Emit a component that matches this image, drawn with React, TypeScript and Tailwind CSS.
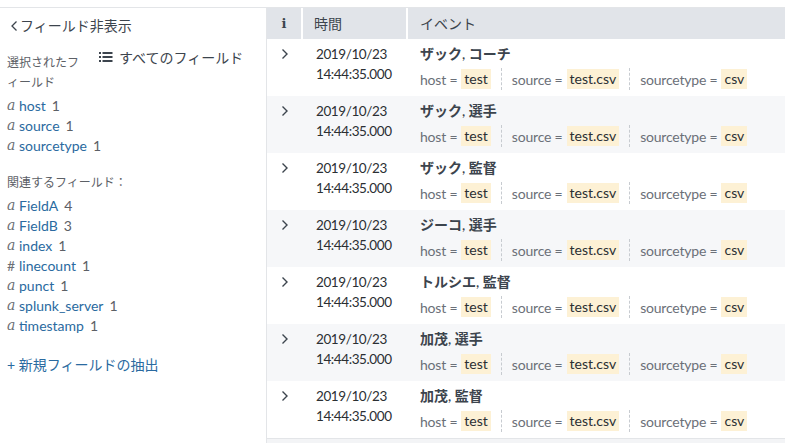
import React from 'react'

const FONT = { fontFamily: 'Lato, "Noto Sans CJK JP", sans-serif' }

type Field = { type: string; name: string; count: number }

const selected: Field[] = [
  { type: 'a', name: 'host', count: 1 },
  { type: 'a', name: 'source', count: 1 },
  { type: 'a', name: 'sourcetype', count: 1 },
]

const related: Field[] = [
  { type: 'a', name: 'FieldA', count: 4 },
  { type: 'a', name: 'FieldB', count: 3 },
  { type: 'a', name: 'index', count: 1 },
  { type: '#', name: 'linecount', count: 1 },
  { type: 'a', name: 'punct', count: 1 },
  { type: 'a', name: 'splunk_server', count: 1 },
  { type: 'a', name: 'timestamp', count: 1 },
]

const events = ['ザック, コーチ', 'ザック, 選手', 'ザック, 監督', 'ジーコ, 選手', 'トルシエ, 監督', '加茂, 選手', '加茂, 監督']

function FieldItem({ f }: { f: Field }) {
  return (
    <div className="flex h-5 items-center text-[14px]">
      {f.type === '#' ? (
        <span className="w-[12px] text-[#6b6f75]">#</span>
      ) : (
        <span className="w-[12px] italic text-[#6b6f75]" style={{ fontFamily: '"DejaVu Serif", serif', fontSize: 14 }}>
          a
        </span>
      )}
      <span className="text-[#2a6aa0]">{f.name}</span>
      <span className="ml-[6px] text-[#5c6066]">{f.count}</span>
    </div>
  )
}

function Sidebar() {
  return (
    <div className="w-[267px] shrink-0 border-r border-[#e3e5e8] pl-[7px] pt-[7px]">
      <div className="flex items-center pl-[3px] text-[14px] text-[#3c444d]">
        <svg width="8" height="12" viewBox="0 0 8 12" className="mr-[2px]">
          <path d="M6.5 1.5 L2 6 L6.5 10.5" fill="none" stroke="#3c444d" strokeWidth="1.3" />
        </svg>
        フィールド非表示
      </div>
      <div className="mt-[11px] flex">
        <div className="w-[86px] pt-[6px] text-[12px] leading-[20px] text-[#5c6066]">
          選択されたフ
          <br />
          ィールド
        </div>
        <div className="ml-[6px] flex h-[20px] items-center text-[14px] text-[#3c444d]">
          <svg width="14" height="12" viewBox="0 0 14 12" className="mr-[6px]">
            <g fill="#3c444d">
              <rect x="0" y="1" width="2" height="2" />
              <rect x="0" y="5" width="2" height="2" />
              <rect x="0" y="9" width="2" height="2" />
              <rect x="3.5" y="1" width="10" height="2" />
              <rect x="3.5" y="5" width="10" height="2" />
              <rect x="3.5" y="9" width="10" height="2" />
            </g>
          </svg>
          すべてのフィールド
        </div>
      </div>
      <div className="mt-[2px]">
        {selected.map((f) => (
          <FieldItem key={f.name} f={f} />
        ))}
      </div>
      <div className="mt-[18px] text-[12px] leading-[20px] text-[#5c6066]">関連するフィールド：</div>
      <div className="mt-[2px]">
        {related.map((f) => (
          <FieldItem key={f.name} f={f} />
        ))}
      </div>
      <div className="mt-[19px] text-[14px] text-[#2a6aa0]">+ 新規フィールドの抽出</div>
    </div>
  )
}

function KV({ k, v, last }: { k: string; v: string; last?: boolean }) {
  return (
    <div className="flex items-center">
      <span className="tracking-[-0.2px] text-[#6b7078]">{k} =</span>
      <span className="ml-[4px] bg-[#fdf1d5] px-[3px] leading-[20px] text-[#2b2f33]">{v}</span>
      {!last && <span className="mx-[10px] h-[22px] border-l border-dashed border-[#c7cbd0]" />}
    </div>
  )
}

function EventRow({ title, odd }: { title: string; odd: boolean }) {
  return (
    <div className={`grid h-[57px] grid-cols-[36px_105px_1fr] ${odd ? 'bg-[#f6f7f9]' : 'bg-white'}`}>
      <div className="pl-[14px] pt-[9px]">
        <svg width="8" height="12" viewBox="0 0 8 12">
          <path d="M1.5 1.5 L6 6 L1.5 10.5" fill="none" stroke="#3c444d" strokeWidth="1.4" />
        </svg>
      </div>
      <div className="pl-[13px] pt-[5px] text-[13.5px] leading-[20px] tracking-[-0.4px] text-[#2b2f33]">
        2019/10/23
        <br />
        14:44:35.000
      </div>
      <div className="pl-[12px] pt-[5px]">
        <div className="text-[14px] font-semibold leading-[20px] text-[#3c444d]">{title}</div>
        <div className="mt-[4px] flex text-[14px]">
          <KV k="host" v="test" />
          <KV k="source" v="test.csv" />
          <KV k="sourcetype" v="csv" last />
        </div>
      </div>
    </div>
  )
}

export default function App() {
  return (
    <div className="h-[443px] w-[785px] overflow-hidden bg-white pt-[7px]" style={FONT}>
      <div className="flex h-[436px] border-t border-[#e3e5e8]">
        <Sidebar />
        <div className="flex-1 bg-[#f3f4f6]">
          <div className="grid h-[31px] grid-cols-[36px_105px_1fr] bg-[#e1e4e9] text-[14px] text-[#3c444d]">
            <div className="flex items-center justify-center border-r-2 border-white font-bold" style={{ fontFamily: '"DejaVu Serif", serif', fontSize: 13 }}>
              i
            </div>
            <div className="flex items-center border-r-2 border-white pl-[11px]">時間</div>
            <div className="flex items-center pl-[12px]">イベント</div>
          </div>
          <div className="border-b border-[#e3e5e8]">
            {events.map((t, i) => (
              <EventRow key={i} title={t} odd={i % 2 === 1} />
            ))}
          </div>
        </div>
      </div>
    </div>
  )
}
